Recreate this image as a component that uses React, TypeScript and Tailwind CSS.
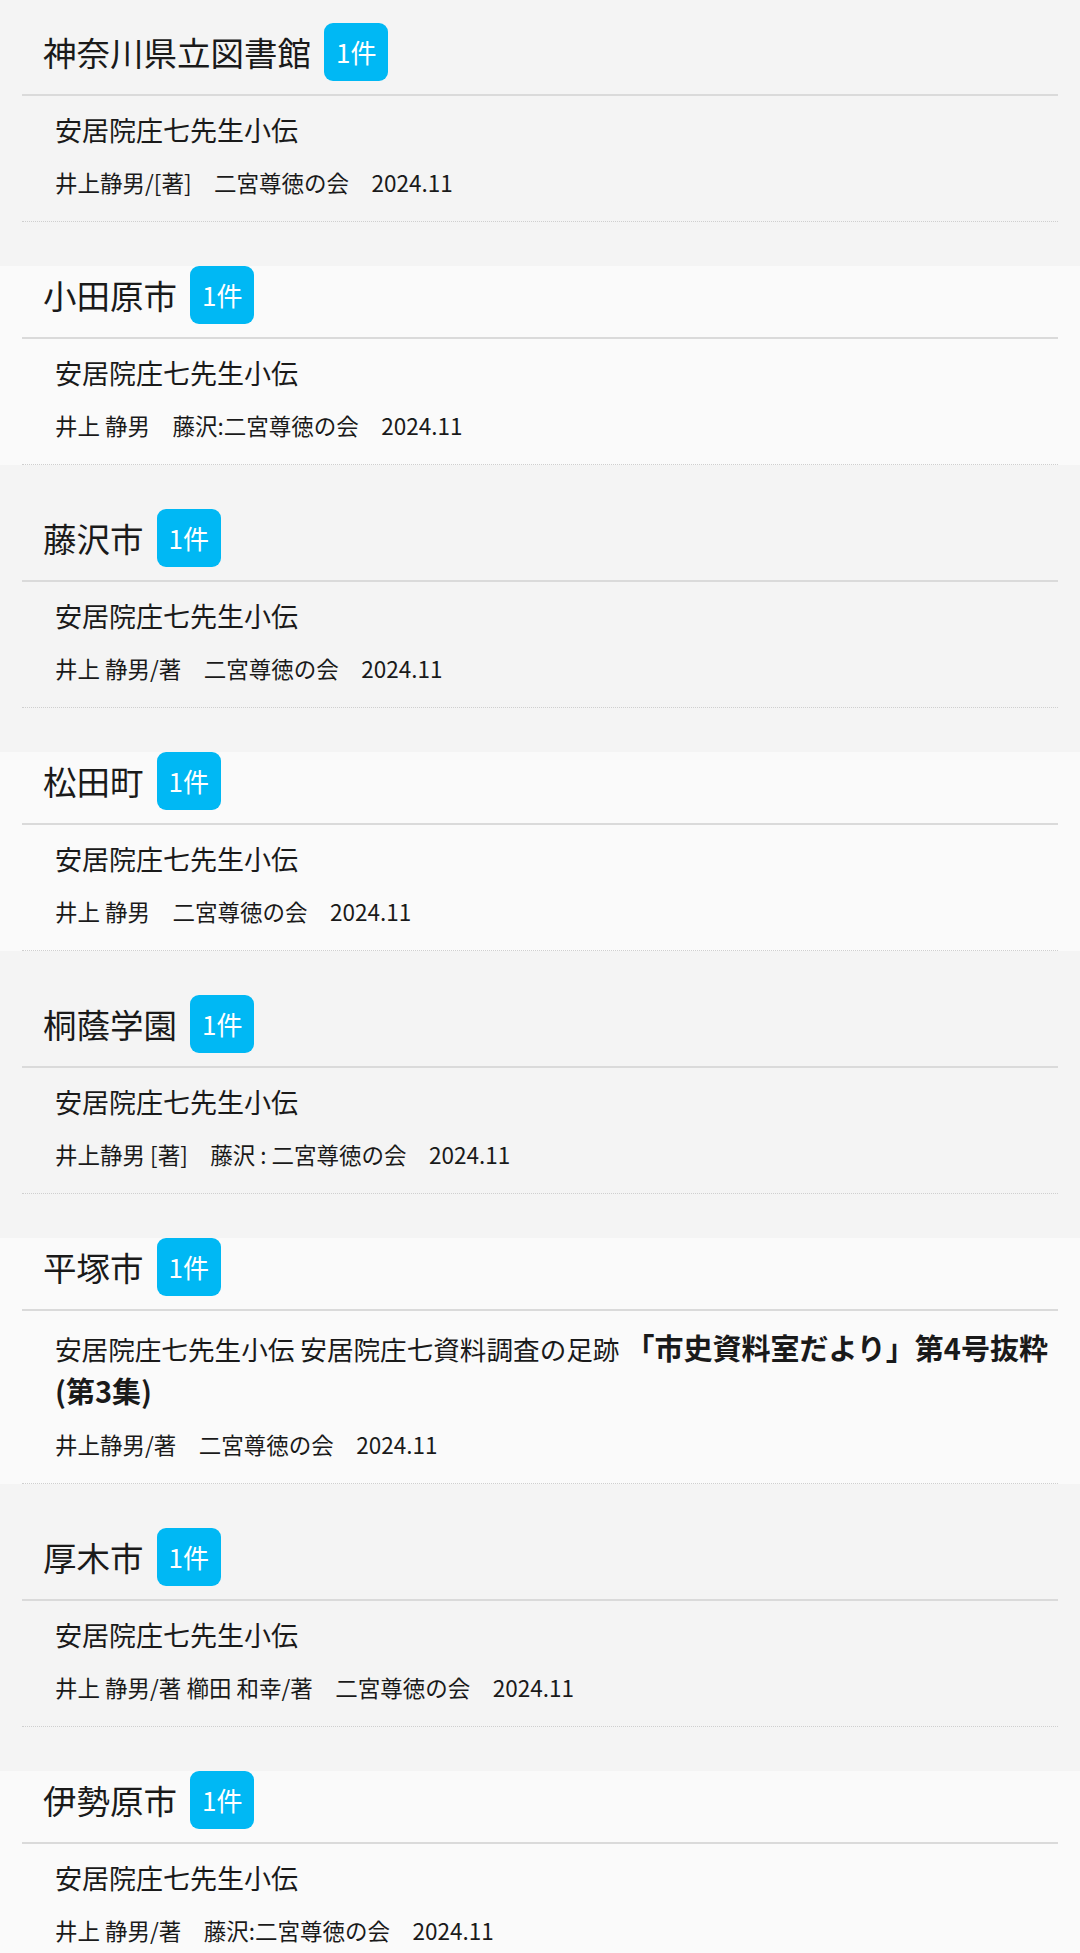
import React from "react";

type Entry = {
  library: string;
  title: React.ReactNode;
  meta: string;
  long?: boolean;
};

const entries: Entry[] = [
  {
    library: "神奈川県立図書館",
    title: "安居院庄七先生小伝",
    meta: "井上静男/[著]　二宮尊徳の会　2024.11",
  },
  {
    library: "小田原市",
    title: "安居院庄七先生小伝",
    meta: "井上 静男　藤沢:二宮尊徳の会　2024.11",
  },
  {
    library: "藤沢市",
    title: "安居院庄七先生小伝",
    meta: "井上 静男/著　二宮尊徳の会　2024.11",
  },
  {
    library: "松田町",
    title: "安居院庄七先生小伝",
    meta: "井上 静男　二宮尊徳の会　2024.11",
  },
  {
    library: "桐蔭学園",
    title: "安居院庄七先生小伝",
    meta: "井上静男 [著]　藤沢 : 二宮尊徳の会　2024.11",
  },
  {
    library: "平塚市",
    long: true,
    title: (
      <>
        安居院庄七先生小伝 安居院庄七資料調査の足跡{" "}
        <strong className="text-[29px] font-bold">
          「市史資料室だより」第4号抜粋(第3集)
        </strong>
      </>
    ),
    meta: "井上静男/著　二宮尊徳の会　2024.11",
  },
  {
    library: "厚木市",
    title: "安居院庄七先生小伝",
    meta: "井上 静男/著 櫛田 和幸/著　二宮尊徳の会　2024.11",
  },
  {
    library: "伊勢原市",
    title: "安居院庄七先生小伝",
    meta: "井上 静男/著　藤沢:二宮尊徳の会　2024.11",
  },
];

const Badge = () => (
  <span className="ml-[13px] flex h-[58px] items-center rounded-[9px] bg-[#00b8f4] px-[12px] text-[26px] leading-none text-white">
    1件
  </span>
);

const Section = ({ entry, index }: { entry: Entry; index: number }) => {
  const shaded = index % 2 === 0;
  return (
    <section
      className={`px-[22px] ${
        shaded ? "bg-[#f4f4f4] pb-[44px]" : "bg-[#fafafa]"
      } ${index === 0 ? "pt-[23px]" : shaded ? "pt-[44px]" : ""}`}
    >
      <div className="flex h-[58px] items-center pl-[21px]">
        <h2 className="text-[33.5px] font-normal leading-none text-[#1a1a1a]">
          {entry.library}
        </h2>
        <Badge />
      </div>
      <div className="mt-[13px] h-[2px] bg-[#dadada]" />
      <div className="border-b border-dotted border-[#cfcfcf] pb-[23px] pl-[33px] text-[#1a1a1a]">
        <p
          className={
            entry.long
              ? "pt-[16px] text-[26.6px] leading-[40.5px]"
              : "pt-[14px] text-[27px] leading-[40px]"
          }
        >
          {entry.title}
        </p>
        <p className="mt-[16px] whitespace-pre text-[22.5px] leading-[32px]">
          {entry.meta}
        </p>
      </div>
    </section>
  );
};

export default function App() {
  return (
    <div
      className="min-h-screen w-[1080px] bg-[#fafafa]"
      style={{ fontFamily: '"Noto Sans CJK JP", "Noto Sans", sans-serif' }}
    >
      {entries.map((entry, i) => (
        <Section key={entry.library} entry={entry} index={i} />
      ))}
    </div>
  );
}
